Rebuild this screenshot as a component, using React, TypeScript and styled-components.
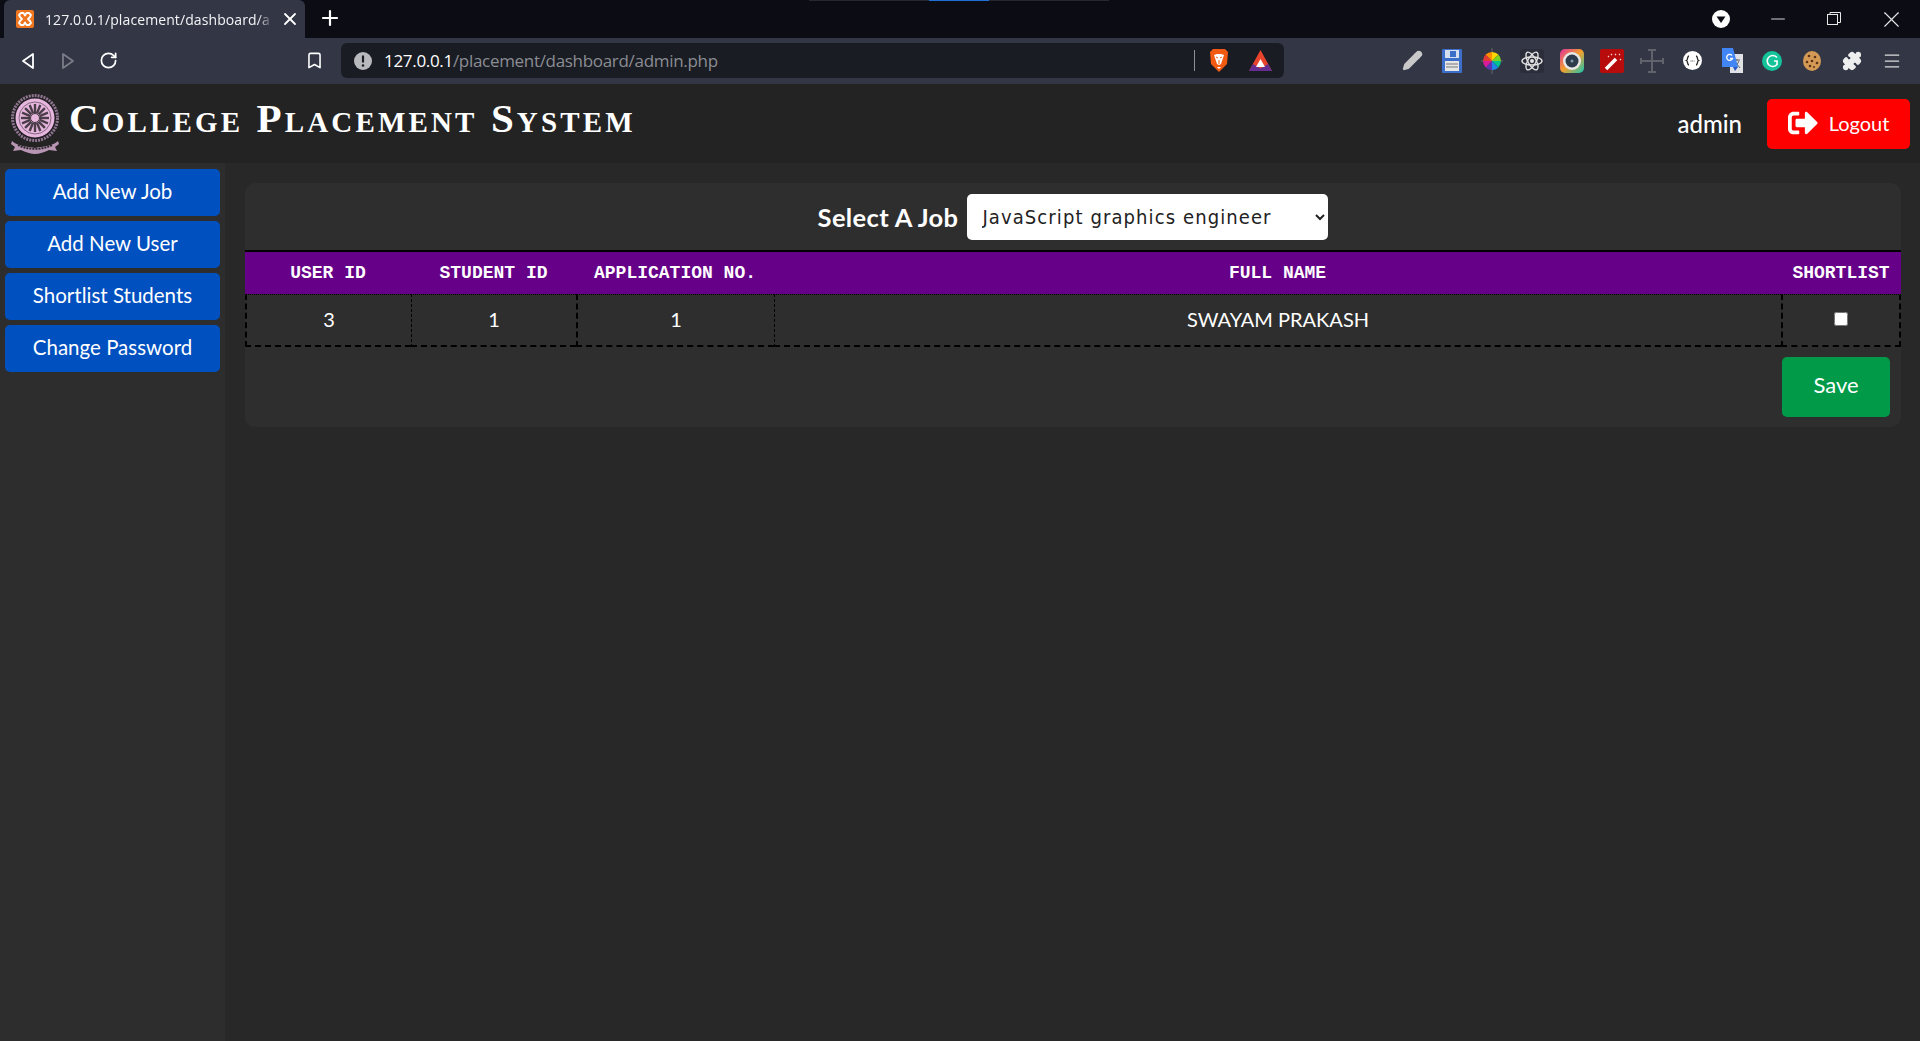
import * as React from 'react';
import styled, { createGlobalStyle } from 'styled-components';
import { Plus, X, Minus, RotateCw, Bookmark, Menu, Puzzle, Pencil } from 'lucide-react';
import { FaSignOutAlt } from 'react-icons/fa';

const GlobalStyle = createGlobalStyle`
  html, body { margin: 0; padding: 0; background: #282828; overflow: hidden; }
  * { box-sizing: border-box; }
`;

const Window = styled.div`
  width: 1920px;
  height: 1041px;
  display: flex;
  flex-direction: column;
  font-family: 'Lato', sans-serif;
  color: #fff;
  overflow: hidden;
`;

/* browser chrome */
const TabStrip = styled.div`
  position: relative;
  height: 38px;
  flex: none;
  background: #0b0c14;
  display: flex;
  align-items: flex-end;
  padding-left: 4px;
`;
const Tab = styled.div`
  width: 301px;
  height: 38px;
  background: #323645;
  border-radius: 6px 6px 0 0;
  display: flex;
  align-items: center;
  padding-left: 12px;
`;
const TabTitle = styled.span`
  margin-left: 11px;
  width: 231px;
  font: 14px 'Open Sans', sans-serif;
  letter-spacing: 0.1px;
  white-space: nowrap;
  color: #f4f4f6;
  -webkit-mask-image: linear-gradient(to right, #000 92%, transparent 99%);
  mask-image: linear-gradient(to right, #000 92%, transparent 99%);
`;
const TabClose = styled(X)`
  margin-left: 4px;
  flex: none;
`;
const NewTab = styled(Plus)`
  margin: 0 0 8px 13px;
`;
const ScreenBar = styled.div`
  position: absolute;
  left: 809px;
  top: 0;
  width: 300px;
  height: 1px;
  background: linear-gradient(to right, #26282c 40%, #1f6fd6 40%, #1f6fd6 60%, #26282c 60%);
`;
const WindowControls = styled.div`
  margin-left: auto;
  height: 38px;
  display: flex;
  align-items: center;
`;
const ControlSlot = styled.div<{ $width: number }>`
  width: ${({ $width }) => $width}px;
  display: flex;
  justify-content: center;
  align-items: center;
`;
const Toolbar = styled.div`
  height: 46px;
  flex: none;
  background: #323645;
  display: flex;
  align-items: center;
  padding: 0 8px 1px;
`;
const NavSlot = styled.div<{ $dim?: boolean }>`
  width: 40px;
  display: flex;
  justify-content: center;
  opacity: ${({ $dim }) => ($dim ? 0.35 : 1)};
`;
const BookmarkSlot = styled(NavSlot)`
  margin-left: 166px;
`;
const UrlBar = styled.div`
  margin-left: 7px;
  width: 943px;
  height: 35px;
  background: #191c23;
  border-radius: 6px;
  display: flex;
  align-items: center;
  padding-left: 13px;
  font: 17px 'Open Sans', sans-serif;
  letter-spacing: -0.31px;
`;
const UrlHost = styled.span`
  margin-left: 12px;
  color: #fff;
`;
const UrlPath = styled.span`
  color: #8b8d93;
`;
const UrlDivider = styled.div`
  margin-left: auto;
  width: 1px;
  height: 21px;
  background: #8d8f95;
`;
const UrlIcon = styled.svg`
  margin-left: 14px;
  flex: none;
`;
const BatIcon = styled(UrlIcon)`
  margin: 0 12px 0 20px;
`;
const Extensions = styled.div`
  margin-left: auto;
  display: flex;
  align-items: center;
`;
const ExtSlot = styled.div`
  width: 40px;
  display: flex;
  justify-content: center;
  align-items: center;
`;

/* page */
const Header = styled.header`
  height: 79px;
  flex: none;
  background: #232323;
  display: flex;
  align-items: center;
  padding: 0 10px;
`;
const Logo = styled.svg`
  flex: none;
`;
const Title = styled.h1`
  margin: -12px 0 0 9px;
  font: bold 41px 'Liberation Serif', serif;
  font-variant: small-caps;
  letter-spacing: 3.15px;
  color: #fff;
  white-space: nowrap;
`;
const UserName = styled.span`
  margin-left: auto;
  font-size: 24px;
  font-weight: 500;
  margin-top: -1px;
`;
const LogoutButton = styled.button`
  margin-left: 25px;
  width: 143px;
  height: 50px;
  border: none;
  border-radius: 5px;
  background: #ff0000;
  color: #fff;
  font: 20px 'Lato', sans-serif;
  padding: 0 0 2px;
  display: flex;
  align-items: center;
  justify-content: center;
  gap: 11px;
`;
const Body = styled.div`
  flex: 1;
  display: flex;
  background: #282828;
`;
const Sidebar = styled.nav`
  width: 225px;
  flex: none;
  background: #2d2d2d;
  padding: 6px 5px;
  display: flex;
  flex-direction: column;
  gap: 5px;
`;
const SideButton = styled.button`
  width: 215px;
  height: 47px;
  border: none;
  border-radius: 5px;
  background: #0050c0;
  color: #fff;
  font: 20.5px 'Lato', sans-serif;
  padding: 0 0 4px;
`;
const Main = styled.main`
  flex: 1;
  padding: 20px 19px 0 20px;
`;
const Panel = styled.section`
  height: 244px;
  background: #2e2e2e;
  border-radius: 10px;
`;
const JobRow = styled.div`
  height: 67px;
  display: flex;
  align-items: center;
  justify-content: center;
  gap: 9px;
  padding-top: 1px;
`;
const JobLabel = styled.label`
  font-size: 25.5px;
  font-weight: 700;
  letter-spacing: 0.35px;
  padding-bottom: 1px;
`;
const JobSelect = styled.select`
  width: 361px;
  height: 46px;
  border: none;
  border-radius: 5px;
  background: #fff;
  color: #222;
  padding: 0 0 0 11px;
  font: 20px 'DejaVu Sans', sans-serif;
  font-stretch: condensed;
  letter-spacing: 1.1px;
`;
const Table = styled.table`
  width: 100%;
  table-layout: fixed;
  border-collapse: separate;
  border-spacing: 0;
`;
const HeadCell = styled.th`
  height: 44px;
  padding: 0;
  background: #660088;
  color: #fff;
  border-top: 2px solid #000;
  font: bold 18px 'Liberation Mono', monospace;
  text-align: center;
  white-space: nowrap;
`;
const Cell = styled.td<{ $thick?: boolean }>`
  height: 53px;
  padding: 0 0 3px;
  text-align: center;
  font-size: 20px;
  color: #fff;
  border-top: 1px dotted #000;
  border-bottom: 2px dashed #000;
  border-left: ${({ $thick }) => ($thick ? '2px' : '1px')} dashed #000;
  &:last-child { border-right: 2px dashed #000; }
`;
const Check = styled.input`
  display: block;
  width: 14px;
  height: 14px;
  margin: 0 auto;
`;
const SaveRow = styled.div`
  display: flex;
  justify-content: flex-end;
  padding: 10px 11px 0 0;
`;
const SaveButton = styled.button`
  width: 108px;
  height: 60px;
  border: none;
  border-radius: 5px;
  background: #009a49;
  color: #fff;
  font: 22px 'Lato', sans-serif;
  padding: 0 0 5px;
`;

const menuItems = ['Add New Job', 'Add New User', 'Shortlist Students', 'Change Password'];
const columns = [
  { title: 'USER ID', width: 166, value: '3', thick: true },
  { title: 'STUDENT ID', width: 165, value: '1', thick: false },
  { title: 'APPLICATION NO.', width: 198, value: '1', thick: true },
  { title: 'FULL NAME', width: 1007, value: 'SWAYAM PRAKASH', thick: false },
];

const Favicon = () => (
  <svg width="18" height="18" viewBox="0 0 18 18">
    <rect width="18" height="18" rx="2" fill="#f0761f" />
    <path d="M5 3h2.500L9 5.500 10.500 3H13l2 2-1 2-2 2 2 2 1 2-2 2h-2.500L9 12.500 7.500 15H5l-2-2 1-2 2-2-2-2-1-2z" fill="none" stroke="#fff" strokeWidth="1.800" strokeLinejoin="round" />
  </svg>
);

const CollegeLogo = () => {
  const spokes = Array.from({ length: 16 }, (_, i) => i * 22.5);
  return (
    <Logo width="50" height="60" viewBox="0 0 50 60">
      <circle cx="25" cy="24" r="22.500" fill="#231f24" stroke="#8f7690" strokeWidth="3" strokeDasharray="2 1" />
      <circle cx="25" cy="24" r="19.500" fill="#e6b6df" />
      <circle cx="25" cy="24" r="16" fill="none" stroke="#3b3139" strokeWidth="0.600" />
      {spokes.map(a => (
        <rect key={a} x="23.800" y="10" width="2.400" height="9" fill="#4a3d48" transform={`rotate(${a} 25 24)`} />
      ))}
      <circle cx="25" cy="24" r="4.500" fill="#e6b6df" stroke="#3b3139" />
      <path d="M2 47c7 6 14 5 23 7 9-2 16-1 23-7l1 3-4 3 2 4-8-1c-4 2-10 4-14 4s-10-2-14-4l-8 1 2-4-4-3z" fill="#b795b3" />
      <path d="M8 51c8 5 26 5 34 0" fill="none" stroke="#2a252a" strokeWidth="2" strokeDasharray="2 1" />
    </Logo>
  );
};

const BraveIcon = () => (
  <UrlIcon width="20" height="25" viewBox="0 0 20 25">
    <path d="M4 1h12l3 3-1 12-8 8-8-8L1 4z" fill="#f25a12" />
    <path d="M5 7l3-1h4l3 1-2 6-1 3-2 1-2-1-1-3zM8 19h4l-2 2z" fill="#fff" />
    <path d="M7 9l2 1M13 9l-2 1M10 12v4" stroke="#f25a12" strokeWidth="1" />
  </UrlIcon>
);

const BatLogo = () => (
  <BatIcon width="23" height="23" viewBox="0 0 23 23">
    <path d="M11.500 1L23 22H0z" fill="#e8442c" />
    <path d="M0 22l4-7 7.500 4.500L19 15l4 7z" fill="#662d91" />
    <path d="M11.500 10l4.500 8h-9z" fill="#fff" />
  </BatIcon>
);

const SaveExt = () => (
  <svg width="20" height="24" viewBox="0 0 20 24">
    <rect width="20" height="24" rx="1" fill="#3b6fc9" />
    <rect x="3" y="1" width="14" height="8" fill="#d6dff0" />
    <rect x="8" y="2" width="6" height="6" fill="#3b6fc9" />
    <rect x="3" y="12" width="14" height="10" fill="#e6e6e6" />
    <path d="M4 15h12M4 18h12" stroke="#777" />
  </svg>
);

const ColorWheel = () => (
  <svg width="22" height="26" viewBox="0 0 22 26">
    <path d="M11 0v26M0 13h22" stroke="#666" strokeWidth="1" />
    <path d="M11 13V4a9 9 0 0 1 6.400 2.600z" fill="#ffd400" />
    <path d="M11 13l6.400-6.400A9 9 0 0 1 20 13z" fill="#7ed321" />
    <path d="M11 13h9a9 9 0 0 1-2.600 6.400z" fill="#00c48c" />
    <path d="M11 13l6.400 6.400A9 9 0 0 1 11 22z" fill="#1e88e5" />
    <path d="M11 13v9a9 9 0 0 1-6.400-2.600z" fill="#5e35b1" />
    <path d="M11 13l-6.400 6.400A9 9 0 0 1 2 13z" fill="#d81b9a" />
    <path d="M11 13H2a9 9 0 0 1 2.600-6.400z" fill="#e53935" />
    <path d="M11 13L4.600 6.600A9 9 0 0 1 11 4z" fill="#ff8f00" />
  </svg>
);

const ReactExt = () => (
  <svg width="24" height="24" viewBox="0 0 24 24">
    <rect width="24" height="24" rx="3" fill="#2b2e3a" />
    <g fill="none" stroke="#e4e4e4" strokeWidth="1.400">
      <ellipse cx="12" cy="12" rx="10" ry="4" />
      <ellipse cx="12" cy="12" rx="10" ry="4" transform="rotate(60 12 12)" />
      <ellipse cx="12" cy="12" rx="10" ry="4" transform="rotate(120 12 12)" />
    </g>
    <circle cx="12" cy="12" r="2" fill="#e4e4e4" />
  </svg>
);

const LensExt = () => (
  <svg width="24" height="24" viewBox="0 0 24 24">
    <defs>
      <linearGradient id="lens" x1="0" y1="0" x2="1" y2="1">
        <stop offset="0" stopColor="#e0329b" />
        <stop offset="0.500" stopColor="#f4a02c" />
        <stop offset="1" stopColor="#14c8b4" />
      </linearGradient>
    </defs>
    <rect width="24" height="24" rx="5" fill="url(#lens)" />
    <circle cx="12" cy="12" r="9" fill="#e8e8e8" />
    <circle cx="12" cy="12" r="6.500" fill="#2d3b4a" />
    <circle cx="12" cy="12" r="1.500" fill="#7f9ab0" />
  </svg>
);

const WandExt = () => (
  <svg width="24" height="24" viewBox="0 0 24 24">
    <rect width="24" height="24" rx="2" fill="#b80c0c" />
    <path d="M6 20L16 10" stroke="#fff" strokeWidth="3.500" />
    <path d="M15 5l1 1M19 6l1-1M20 10l1 1M11 5l1 1M8 7l1 1" stroke="#f2d0d0" strokeWidth="1.300" />
  </svg>
);

const CrossExt = () => (
  <svg width="24" height="24" viewBox="0 0 24 24">
    <path d="M12 1v22M1 12h22M8 1h8M8 23h8M1 9v6M23 9v6" stroke="#60636c" strokeWidth="2" fill="none" />
  </svg>
);

const BracesExt = () => (
  <svg width="19" height="19" viewBox="0 0 19 19">
    <circle cx="9.500" cy="9.500" r="9.500" fill="#fff" />
    <path d="M6 5C4 5 5 9 3.500 9.500 5 10 4 14 6 14M13 5c2 0 1 4 2.500 4.500C14 10 15 14 13 14" fill="none" stroke="#222" strokeWidth="1.300" />
    <path d="M7.500 10h4" stroke="#555" strokeWidth="1" strokeDasharray="1 .7" />
  </svg>
);

const TranslateExt = () => (
  <svg width="21" height="25" viewBox="0 0 21 25">
    <rect x="8" y="6" width="13" height="19" fill="#dfe1e5" />
    <path d="M12 12h6M15 11v2M13 20l4-7M14 15l4 5" stroke="#666" fill="none" />
    <path d="M0 0h11l5 19H0z" fill="#4285f4" />
    <path d="M11 19l5 0-3 4z" fill="#2a56c6" />
    <path d="M10 7.500a3 3 0 1 0 .5 3H8" fill="none" stroke="#fff" strokeWidth="1.300" />
  </svg>
);

const GrammarlyExt = () => (
  <svg width="20" height="24" viewBox="0 0 20 24">
    <circle cx="10" cy="12" r="10" fill="#15c39a" />
    <path d="M15 8.500A5.500 5.500 0 1 0 15 15.500V12h-3" fill="none" stroke="#fff" strokeWidth="1.600" />
  </svg>
);

const CookieExt = () => (
  <svg width="18" height="20" viewBox="0 0 18 20">
    <ellipse cx="9" cy="10" rx="9" ry="10" fill="#d49a55" />
    <g fill="#5b3417">
      <circle cx="6" cy="5" r="1.300" />
      <circle cx="12" cy="6" r="1.300" />
      <circle cx="4" cy="11" r="1.300" />
      <circle cx="9" cy="10" r="1.300" />
      <circle cx="14" cy="12" r="1.300" />
      <circle cx="7" cy="15" r="1.300" />
      <circle cx="11" cy="16" r="1" />
    </g>
  </svg>
);

const App = () => (
  <>
    <GlobalStyle />
    <Window>
      <TabStrip>
        <ScreenBar />
        <Tab>
          <Favicon />
          <TabTitle>127.0.0.1/placement/dashboard/a</TabTitle>
          <TabClose size={20} color="#fff" strokeWidth={2.200} />
        </Tab>
        <NewTab size={24} color="#fff" strokeWidth={2.200} />
        <WindowControls>
          <ControlSlot $width={58}>
            <svg width="18" height="18" viewBox="0 0 18 18">
              <circle cx="9" cy="9" r="9" fill="#fff" />
              <path d="M4.500 6.500h9L9 13z" fill="#0b0c14" />
            </svg>
          </ControlSlot>
          <ControlSlot $width={56}>
            <Minus size={22} color="#e8e8e8" strokeWidth={1} />
          </ControlSlot>
          <ControlSlot $width={56}>
            <svg width="14" height="14" viewBox="0 0 14 14" fill="none" stroke="#e8e8e8">
              <rect x="0.500" y="2.500" width="10" height="10" />
              <path d="M3 2.500V.5h10.500v10h-3" />
            </svg>
          </ControlSlot>
          <ControlSlot $width={58}>
            <X size={27} color="#e8e8e8" strokeWidth={1} />
          </ControlSlot>
        </WindowControls>
      </TabStrip>
      <Toolbar>
        <NavSlot>
          <svg width="14" height="18" viewBox="0 0 14 18" fill="none" stroke="#fff" strokeWidth="1.800" strokeLinejoin="round">
            <path d="M12 2v14L2 9z" />
          </svg>
        </NavSlot>
        <NavSlot $dim>
          <svg width="14" height="18" viewBox="0 0 14 18" fill="none" stroke="#fff" strokeWidth="1.800" strokeLinejoin="round">
            <path d="M2 2v14l10-7z" />
          </svg>
        </NavSlot>
        <NavSlot>
          <RotateCw size={19} color="#fff" strokeWidth={2.200} />
        </NavSlot>
        <BookmarkSlot>
          <Bookmark size={19} color="#fff" strokeWidth={2} />
        </BookmarkSlot>
        <UrlBar>
          <svg width="18" height="18" viewBox="0 0 18 18">
            <circle cx="9" cy="9" r="9" fill="#b8b9bd" />
            <path d="M9 3.500v7" stroke="#191c23" strokeWidth="2.200" />
            <circle cx="9" cy="13.500" r="1.300" fill="#191c23" />
          </svg>
          <UrlHost>127.0.0.1</UrlHost>
          <UrlPath>/placement/dashboard/admin.php</UrlPath>
          <UrlDivider />
          <BraveIcon />
          <BatLogo />
        </UrlBar>
        <Extensions>
          <ExtSlot><Pencil size={21} color="#c9c9c9" fill="#c9c9c9" /></ExtSlot>
          <ExtSlot><SaveExt /></ExtSlot>
          <ExtSlot><ColorWheel /></ExtSlot>
          <ExtSlot><ReactExt /></ExtSlot>
          <ExtSlot><LensExt /></ExtSlot>
          <ExtSlot><WandExt /></ExtSlot>
          <ExtSlot><CrossExt /></ExtSlot>
          <ExtSlot><BracesExt /></ExtSlot>
          <ExtSlot><TranslateExt /></ExtSlot>
          <ExtSlot><GrammarlyExt /></ExtSlot>
          <ExtSlot><CookieExt /></ExtSlot>
          <ExtSlot><Puzzle size={20} color="#eee" fill="#eee" /></ExtSlot>
          <ExtSlot><Menu size={20} color="#ddd" strokeWidth={1.500} /></ExtSlot>
        </Extensions>
      </Toolbar>

      <Header>
        <CollegeLogo />
        <Title>College Placement System</Title>
        <UserName>admin</UserName>
        <LogoutButton>
          <FaSignOutAlt size={30} />
          Logout
        </LogoutButton>
      </Header>

      <Body>
        <Sidebar>
          {menuItems.map(item => (
            <SideButton key={item}>{item}</SideButton>
          ))}
        </Sidebar>
        <Main>
          <Panel>
            <JobRow>
              <JobLabel htmlFor="job">Select A Job</JobLabel>
              <JobSelect id="job" defaultValue="JavaScript graphics engineer">
                <option>JavaScript graphics engineer</option>
              </JobSelect>
            </JobRow>
            <Table>
              <colgroup>
                {columns.map(c => (
                  <col key={c.title} width={c.width} />
                ))}
                <col />
              </colgroup>
              <thead>
                <tr>
                  {columns.map(c => (
                    <HeadCell key={c.title}>{c.title}</HeadCell>
                  ))}
                  <HeadCell>SHORTLIST</HeadCell>
                </tr>
              </thead>
              <tbody>
                <tr>
                  {columns.map(c => (
                    <Cell key={c.title} $thick={c.thick}>{c.value}</Cell>
                  ))}
                  <Cell $thick><Check type="checkbox" /></Cell>
                </tr>
              </tbody>
            </Table>
            <SaveRow>
              <SaveButton>Save</SaveButton>
            </SaveRow>
          </Panel>
        </Main>
      </Body>
    </Window>
  </>
);

export default App;
